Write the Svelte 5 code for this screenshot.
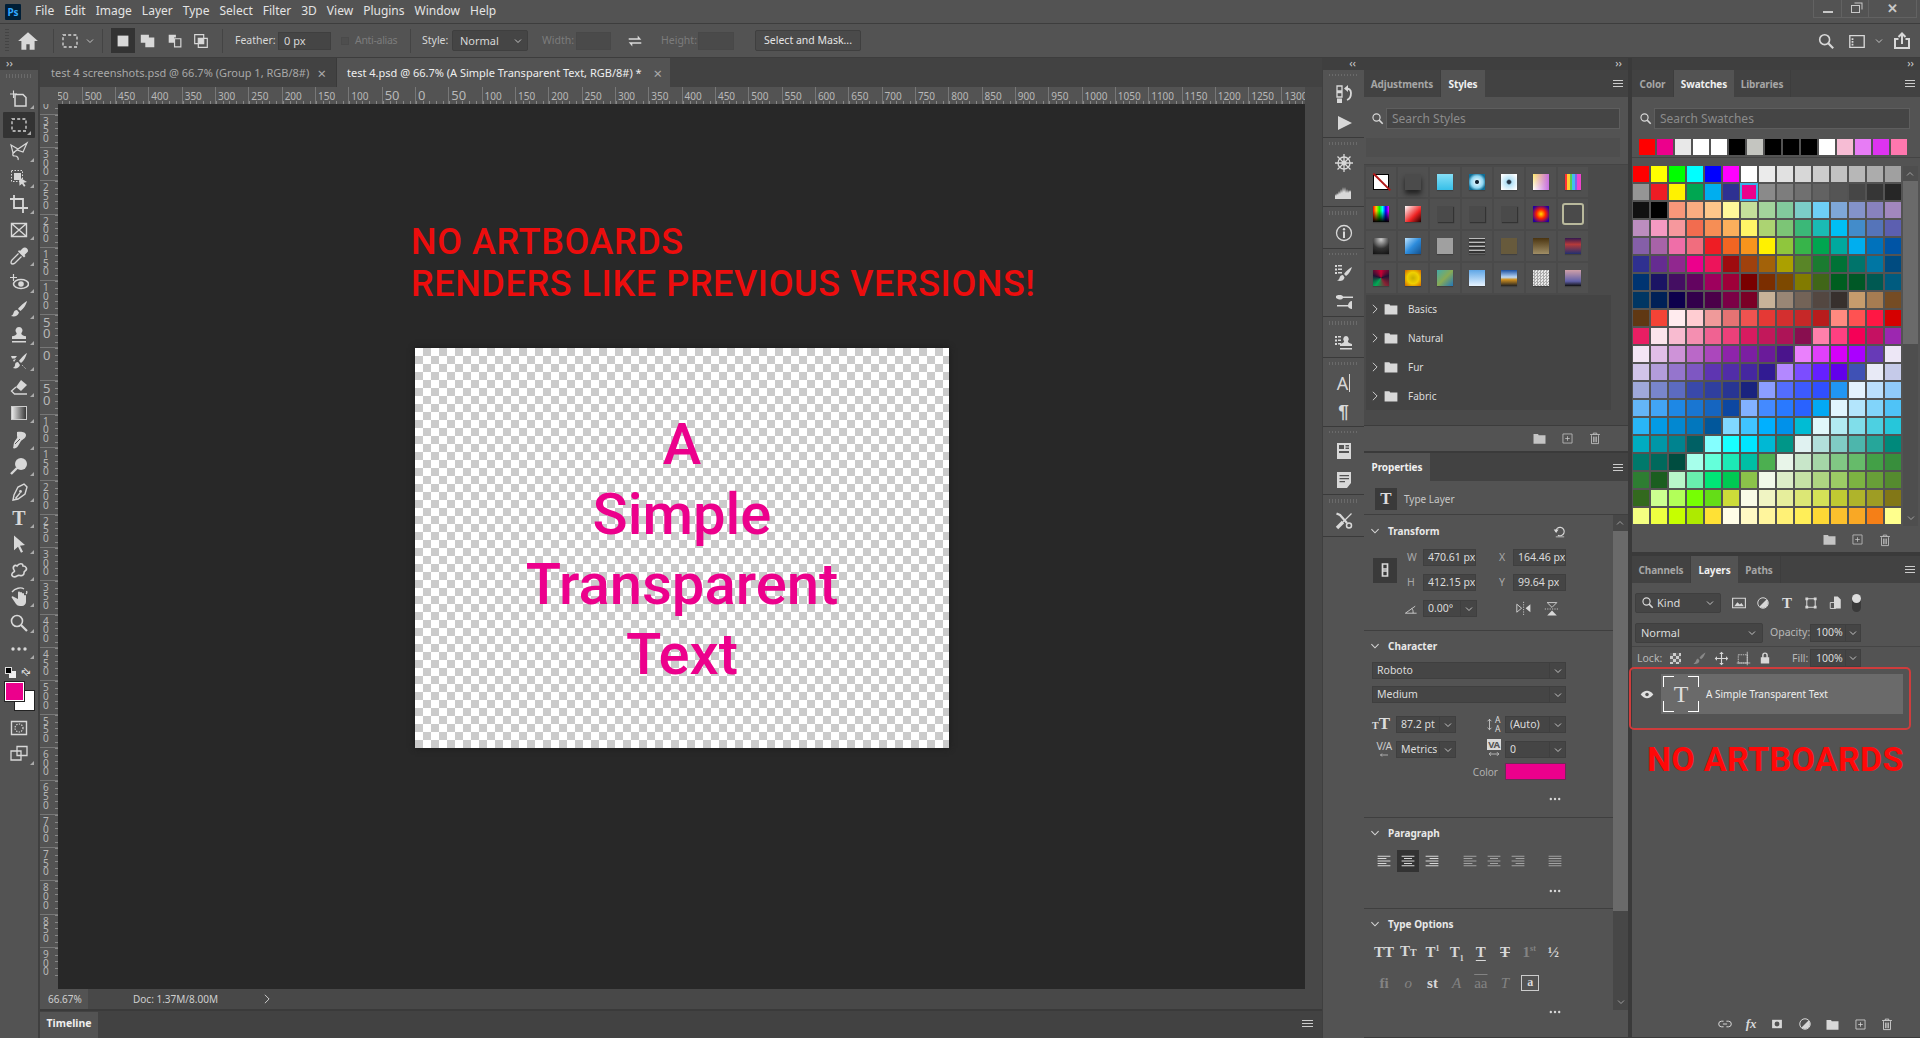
<script>
  const p = (d, w = 1.3) => `<path d="${d}" fill="none" stroke="currentColor" stroke-width="${w}"/>`;
  const f = (d) => `<path d="${d}" fill="currentColor"/>`;
  const icons = {
    home: f('M10 2 1 10h3v8h4.500v-5h3v5H16v-8h3z'),
    marquee: '<rect x="3" y="4" width="14" height="12" fill="none" stroke="currentColor" stroke-width="1.300" stroke-dasharray="3 2.200"/>',
    sel1: f('M4 4h12v12H4z'),
    sel2: f('M2 3h9v3h6v11H7v-5H2z'),
    sel3: f('M3 3h8v3H9v6H3z') + p('M9.500 7.500h7v9h-7z'),
    sel4: p('M3 3h10v10H3z') + p('M7 7h10v10H7z') + f('M7 7h6v6H7z'),
    swap: f('M3 7h10V4l4 4.500H3zM17 13H7v3l-4-4.500h14z'),
    search: '<circle cx="8.500" cy="8.500" r="5.500" fill="none" stroke="currentColor" stroke-width="1.800"/>' + p('M12.500 12.500 18 18', 2.4),
    screen: p('M2 4h16v13H2z', 1.500) + f('M4 7h2v2H4zM4 10h2v2H4zM4 13h2v2H4z'),
    share: p('M6.500 8H3v9h14V8h-3.500', 2) + p('M10 13V2.500M6.500 6 10 2.500 13.500 6', 2),
    artboard: p('M6 5.500h8l3 3V17H6z', 1.500) + p('M1 5h7M4.500 1.500V9', 1.100),
    lasso: p('M2 4 9 8 18 2 14 11 8 9 4 12z', 1.200) + p('M6 11c-3 1-3 4 0 4 2 0 4 2 3 4', 1.200),
    object: '<rect x="2.500" y="2.500" width="11" height="11" fill="none" stroke="currentColor" stroke-dasharray="1.500 1.500"/>' + f('M5 5h7v7H5z') + f('M10 9l8 5-3.500.800 2 3-1.500 1-2-3-2.500 2z'),
    crop: p('M5 1v13h14M1 5h13v14', 1.800),
    frame: p('M2.500 3.500h15v13h-15zM2.500 3.500l15 13M17.500 3.500l-15 13', 1.400),
    eyedrop: f('M14 2c1-1 3-.500 4 .500s1.500 2.500.500 3.500l-3 3 1 1-1.500 1.500-6-6L10 4l1 1z') + p('M9.500 7.500 3 14c-1 1-1 2-1 3l1 1c1 0 2 0 3-1l6.500-6.500'),
    heal: '<ellipse cx="12" cy="12" rx="7.500" ry="4.500" fill="none" stroke="currentColor" stroke-width="1.600"/><circle cx="12" cy="12" r="2.800" fill="currentColor"/>' + p('M1 5.500h7M4.500 2v7', 1.200),
    brush: f('M18 2c-2 1-7 5-9 8l2.500 2c3-2 6-7 6.500-10zM8 11c-2 0-3 1-3.500 3-.300 1.500-1.500 2.500-2.500 3 3 1 7 .500 8-3.500z'),
    stamp: f('M10 2a3.500 3.500 0 0 1 2.500 6c-.500.800 0 1.500 1.500 2.500 1 .500 2 .500 3 .800V14H3v-2.700c1-.300 2-.300 3-.800 1.500-1 2-1.700 1.500-2.500A3.500 3.500 0 0 1 10 2zM3 16h14v1.500H3z'),
    mixer: f('M18 2c-2 1-6 5-8 8l2 2c3-2 5-7 6-10zM9 11c-2 0-3 1-3 3 0 1.500-1 2-2 3 3 1 6 0 7-3zM2 5h6l-2 2.500H3zM4 9l3-1-2 3z') + '<path d="M13 14l4 4" stroke="currentColor" stroke-dasharray="1 1.500" fill="none"/>',
    eraser: f('M12 3 18 8 12 14 7 10z') + p('M7 10 2.500 14l3 3H18', 1.300),
    gradient: '<defs><linearGradient id="gr"><stop stop-color="#eee"/><stop offset="1" stop-color="#333"/></linearGradient></defs><rect x="2.500" y="3.500" width="15" height="13" fill="url(#gr)" stroke="#ccc"/>',
    smudge: f('M8 2c4-1 9 0 9 3 0 3-3 4-5 6l-3 5c-1 2-4 3-5 2 1-2 0-4 2-7 1-2 3-3 2-5z') + '<path d="M11 9 6 14" stroke="#535353" stroke-width="1" fill="none"/>',
    dodge: '<circle cx="12" cy="8" r="6" fill="currentColor"/>' + p('M8 12 2 18', 2.400),
    pen: p('M15 2l3 3-2 7-7 5-5 1 1-5 4-8zM6.500 16.500 11 11', 1.400) + '<circle cx="11.500" cy="9.500" r="1.400" fill="currentColor"/>',
    pointer: f('M5 1.500 16 11l-5 .800 3 6-2 1-3-6-4 3.500z'),
    shape: p('M5 10C3 7 6 4 8 6c2-3 6-3 6 0 3 0 5 3 2 5-2 1 0 3-2 4-2 2-4-1-6 1-3 2-6 0-5-2 0-2 4-2 2-4z', 1.600),
    hand: f('M5 10c-2-2-3 0-2 1l4 6c1 1 2 2 4 2h2c2 0 4-2 4-4V9c0-1.500-2-1.500-2 0V7c0-1.500-2-1.500-2 0V6c0-1.500-2-1.500-2 0v-.500c0-1.500-2-1.500-2 0V12z') + p('M3 5C6 1 12 0 15 2M17 7c1-1 1-2 .500-3', 1.300),
    zoom: '<circle cx="8" cy="8" r="5.500" fill="none" stroke="currentColor" stroke-width="1.600"/>' + p('M12 12l6 6', 2.200),
    dots: '<circle cx="4" cy="10" r="1.700" fill="currentColor"/><circle cx="10" cy="10" r="1.700" fill="currentColor"/><circle cx="16" cy="10" r="1.700" fill="currentColor"/>',
    quick: p('M2.500 3.500h15v13h-15z', 1.400) + '<circle cx="10" cy="10" r="4" fill="none" stroke="currentColor" stroke-width="1.200" stroke-dasharray="1.300 1.300"/>',
    scrmode: p('M8 2.500h10v9H8z', 1.300) + p('M2 7h10v9H2z', 1.300),
    history: p('M3 2h5v5H3zM3 8.500h5v4.500H3z', 1.300) + f('M3 14.500h5V19H3z') + p('M12 5c3-1 5 1 5 4 0 3-1 6-4 7', 1.800) + f('M10 4.500 14 1v7z'),
    play: f('M4 3 18 10 4 17z'),
    wheel: '<circle cx="10" cy="10" r="6" fill="none" stroke="currentColor" stroke-width="1.300"/>' + p('M1 10h18M10 1v18M3.500 3.500l13 13M16.500 3.500l-13 13', 1.300) + '<circle cx="10" cy="10" r="2.500" fill="currentColor"/>',
    histo: f('M1 17v-5l1 2 1-3 1 2 1-4 1 3 1-5 1 4 1-6 1 5 1-5 1 6 1-4 1 4 1-3 1 2 1-2v9z'),
    info: '<circle cx="10" cy="10" r="7.500" fill="none" stroke="currentColor" stroke-width="1.300"/><circle cx="10" cy="6.300" r="1.200" fill="currentColor"/><path d="M9 8.500h2V15H9z" fill="currentColor"/>',
    brushset: f('M1 2h2v2H1zM1 5.500h2v2H1zM1 9h2v2H1zM4 2h4v1.500H4zM4 5.500h4V7H4zM4 9h4v1.500H4z') + f('M18 4c-2 1-6 4-8 7l2 2c3-2 5-6 6-9zM9 12c-2 0-3 1-3.500 3-.300 1-1 2-2.500 2.500 3 1 7 .500 7.500-3z'),
    mixers: f('M2 4c2-1.500 3-1 4-1 1.500 0 2.500 .500 3 1.500h10v1.400H9C8.500 7 7 7.500 6 7.500 5 7.500 4 7 2 6zM18 9v8c-2 0-3.500-1-4-2.500H3V13h11c.500-2 2-4 4-4z'),
    stampset: f('M1 3h2v2H1zM1 6.500h2v2H1zM1 10h2v2H1zM4 3h3v1.500H4zM4 6.500h3V8H4zM4 10h3v1.500H4z') + f('M12 3a3 3 0 0 1 2 5c-.500 1 .500 2 4 3v2H6v-2c3.500-1 4.500-2 4-3a3 3 0 0 1 2-5zM6 15h12v1.500H6z'),
    glyphs: f('M3 2h14v16H3zM5 4v4h5V4zM11.500 4v1.500H15V4zM11.500 6.500V8H15V6.500zM5 10v2h10v-2z'),
    notes: f('M3 2h14v11l-4 5H3zM5.500 5v1.300H15V5zM5.500 8v1.300H15V8zM5.500 11v1.300H11V11z'),
    tools: p('M17.500 2.500 9 11', 1.300) + p('M9 11 3 17', 3.400) + p('M2.500 2.500 6 4 13 12', 2.200) + '<circle cx="15" cy="14.500" r="2.500" fill="none" stroke="currentColor" stroke-width="1.500"/>',
    chev: p('M4 7l6 6 6-6', 1.700),
    chevr: p('M7 4l6 6-6 6', 1.300),
    folder: f('M2 4h6l1 1.500h9V17H2z'),
    newp: p('M3 3h14v14H3z', 1.200) + p('M10 6.500v7M6.500 10h7', 1.200),
    trash: p('M5 6v12h10V6M3 5h14M7.500 5V3h5v2M8 8v8M10 8v8M12 8v8', 1.200),
    link: p('M7.500 4h5v7h-5zM7.500 9h5v7h-5z', 1.700),
    undo: p('M4 11a6 6 0 1 1 3 5', 1.600) + f('M1 8h7l-3.500 5zM4 18h12v1H4z'),
    angle: p('M2 16 16 6M2 16h16M11 9c2 2 2 4 2 7', 1.200),
    flipv: p('M1 4l6 5-6 5z', 1.100) + f('M18 4v10l-6-5z') + '<path d="M9.500 1v17" stroke="currentColor" stroke-dasharray="1.500 1.500"/>',
    fliph: p('M4 2l6 6 6-6z', 1.100) + f('M4 18l6-6 6 6z') + '<path d="M1 10h18" stroke="currentColor" stroke-dasharray="1.500 1.500"/>',
    image: p('M2 4h16v12H2z', 1.400) + f('M4 14l4-5 3 3 2-2 3 4z'),
    adjust: '<circle cx="10" cy="10" r="7.500" fill="none" stroke="currentColor" stroke-width="1.400"/><path d="M15 5 5 15a7 7 0 0 0 10-10z" fill="currentColor"/>',
    bbox: p('M4 4h12v12H4z', 1.500) + f('M2 2h4v4H2zM14 2h4v4h-4zM2 14h4v4H2zM14 14h4v4h-4z'),
    smart: f('M8 2h5l4 4v12H8z') + p('M3 10h7v8H3z', 1.200),
    lockp: f('M18 2c-2 1-6 4-8 7l2 2c3-2 5-6 6-9zM8 10c-2 .500-2 2-3 4-.400 1-2 2-3 3 3 1 7 0 8-4z'),
    move: p('M10 2v16M2 10h16', 1.500) + f('M10 1l3 3H7zM10 19l-3-3h6zM1 10l3-3v6zM19 10l-3 3V7z'),
    lockart: '<rect x="3" y="5" width="12" height="11" fill="none" stroke="currentColor" stroke-dasharray="2 1"/>' + p('M1 16h18M15 1v18', 1),
    lock: f('M4 9h12v9H4zM6 9V6a4 4 0 0 1 8 0v3h-2V6a2 2 0 0 0-4 0v3z'),
    chain: p('M7 10h6M8 6H5a4 4 0 0 0 0 8h3M12 6h3a4 4 0 0 1 0 8h-3', 1.400),
    mask: f('M3 4h14v12H3z') + '<circle cx="10" cy="10" r="3.500" fill="#535353"/>',
    alignl: p('M2 4h16M2 7h11M2 10h16M2 13h11M2 16h16', 1.300),
    alignc: p('M2 4h16M5 7h10M2 10h16M5 13h10M2 16h16', 1.300),
    alignr: p('M2 4h16M7 7h11M2 10h16M7 13h11M2 16h16', 1.300),
    justify: p('M2 4h16M2 7h16M2 10h16M2 13h16M2 16h16', 1.300),
    vert: p('M10 2v16M7 5l3-3 3 3M7 15l3 3 3-3', 1.200),
    horiz: p('M2 10h16M5 7l-3 3 3 3M15 7l3 3-3 3', 1.200),
    left: p('M18 10H3M6 7l-3 3 3 3', 1.300)
  };

  const menu = ['File', 'Edit', 'Image', 'Layer', 'Type', 'Select', 'Filter', '3D', 'View', 'Plugins', 'Window', 'Help'];

  const hticks = Array.from({ length: 38 }, (_, i) => Math.abs((i - 11) * 50));
  const vticks = Array.from({ length: 27 }, (_, i) => Math.abs((i - 8) * 50));

  const tools = ['artboard', 'marquee', 'lasso', 'object', 'crop', 'frame', 'eyedrop', 'heal', 'brush', 'stamp', 'mixer', 'eraser', 'gradient', 'smudge', 'dodge', 'pen', 'T', 'pointer', 'shape', 'hand', 'zoom', 'dots'];

  const dock = [
    { h: 68, items: ['history', 'play'] },
    { h: 69, items: ['wheel', 'histo'] },
    { h: 42, items: ['info'] },
    { h: 68, items: ['brushset', 'mixers'] },
    { h: 41, items: ['stampset'] },
    { h: 69, items: ['A', 'P'] },
    { h: 68, items: ['glyphs', 'notes'] },
    { h: 42, items: ['tools'] }
  ];

  const styleCells = [
    'linear-gradient(45deg,#fff 0 100%)',
    '#4b4b4b',
    'linear-gradient(#86dff6,#36bfe8)',
    'radial-gradient(circle,#123 0 1.500px,#cfeefa 2.500px,#8ed6f2 6px,#0f6d95 9px)',
    'radial-gradient(circle,#234 0 1.500px,#b5e3f8 3px,#fff 10px)',
    'linear-gradient(90deg,#ffffff00,#c86ee0),linear-gradient(#ffe96a,#fff)',
    'linear-gradient(90deg,#f33 0 15%,#fc3 15% 30%,#5c5 30% 45%,#4be 45% 60%,#76e 60% 75%,#e4c 75%)',
    'linear-gradient(#fff0 30%,#000),linear-gradient(90deg,#f00,#fc0,#0f0,#0ff,#00f,#f0f)',
    'linear-gradient(135deg,#fff,#e22 60%,#200)',
    '#4a4a4a', '#4a4a4a', '#4a4a4a',
    'radial-gradient(circle,#fd0 0,#f20 40%,#2200a0 85%)',
    'transparent',
    'radial-gradient(circle at 50% 10%,#ccc,#333 55%,#111)',
    'linear-gradient(135deg,#bfe4ff,#2d8cdc 50%,#14508c)',
    '#a0a0a0',
    'repeating-linear-gradient(#bbb 0 1px,#333 1px 3px,#666 3px 4px)',
    '#675a3c',
    'linear-gradient(#4a3410,#a08e66)',
    'linear-gradient(#33184f,#b53a3a 40%,#203070)',
    'conic-gradient(#c03,#213,#823,#0a5,#213,#c03)',
    'radial-gradient(circle,#c8b000,#f0d000 50%,#d06000)',
    'linear-gradient(135deg,#4aa 0,#8a5 50%,#27b 100%)',
    'linear-gradient(#5fa6e6,#e8f4ff)',
    'linear-gradient(#1b4fa0,#bcd8f6 45%,#d09020 60%,#222)',
    'repeating-conic-gradient(#aaa 0 25%,#e8e8e8 0 50%) 0 0/3px 3px',
    'linear-gradient(#d0a0a8,#6060a8 70%,#111)'
  ];

  const recent = ['#ff0000', '#ec008c', '#e8e8e8', '#ffffff', '#ffffff', '#000000', '#c4c5c0', '#000000', '#000000', '#000000', '#ffffff', '#f6bcd4', '#e77cf5', '#dd33f0', '#ff77ae'];

  const swatches = `#ff0000 #ffff00 #00ff00 #00ffff #0000ff #ff00ff #ffffff #ebebeb #e1e1e1 #d7d7d7 #cccccc #c2c2c2 #b7b7b7 #acacac #a0a0a0
#959595 #ed1c24 #fff200 #00a651 #00aeef #2e3192 #ec008c #8a8a8a #7d7d7d #707070 #626262 #555555 #464646 #363636 #262626
#111111 #000000 #f7977a #f9ad81 #fdc68a #fff79a #c4df9b #a2d39c #82ca9d #7bcdc8 #6ecff6 #7ea7d8 #8493ca #8882be #a187be
#bc8dbf #f49ac2 #f6989d #f26c4f #f68e55 #fbaf5c #fff467 #acd372 #7cc576 #3bb878 #1abbb4 #00bff3 #438cca #5574b9 #5c5fb0
#855fa8 #a763a8 #ef6ea8 #f16d7e #ee1d24 #f16522 #f7941d #fff100 #8fc63d #37b44a #00a650 #00a99e #00aeef #0072bc #0054a5
#2f3090 #652c91 #91278f #ec008c #ed145b #9e0b0f #a0410d #a36209 #aba000 #598527 #1a7b30 #007236 #00746b #0076a3 #004b80
#003471 #1b1464 #440e62 #630460 #9e005d #9e0039 #790000 #7b2e00 #7d4900 #827b00 #406618 #005e20 #005826 #005952 #005b7f
#003663 #002157 #0d004c #32004b #4b0049 #7b0046 #7a0026 #c7b299 #998675 #736357 #534741 #37302d #c69c6d #a67c52 #754c24
#603813 #f44336 #ffebee #ffcdd2 #ef9a9a #e57373 #ef5350 #e53935 #d32f2f #c62828 #b71c1c #ff8a80 #ff5252 #ff1744 #d50000
#e91e63 #fce4ec #f8bbd0 #f48fb1 #f06292 #ec407a #d81b60 #c2185b #ad1457 #880e4f #ff80ab #ff4081 #f50057 #c51162 #9c27b0
#f3e5f5 #e1bee7 #ce93d8 #ba68c8 #ab47bc #8e24aa #7b1fa2 #6a1b9a #4a148c #ea80fc #e040fb #d500f9 #aa00ff #673ab7 #ede7f6
#d1c4e9 #b39ddb #9575cd #7e57c2 #5e35b1 #512da8 #4527a0 #311b92 #b388ff #7c4dff #651fff #6200ea #3f51b5 #e8eaf6 #c5cae9
#9fa8da #7986cb #5c6bc0 #3949ab #303f9f #283593 #1a237e #8c9eff #536dfe #3d5afe #304ffe #2196f3 #e3f2fd #bbdefb #90caf9
#64b5f6 #42a5f5 #1e88e5 #1976d2 #1565c0 #0d47a1 #82b1ff #448aff #2979ff #2962ff #03a9f4 #e1f5fe #b3e5fc #81d4fa #4fc3f7
#29b6f6 #039be5 #0288d1 #0277bd #01579b #80d8ff #40c4ff #00b0ff #0091ea #00bcd4 #e0f7fa #b2ebf2 #80deea #4dd0e1 #26c6da
#00acc1 #0097a7 #00838f #006064 #84ffff #18ffff #00e5ff #00b8d4 #009688 #e0f2f1 #b2dfdb #80cbc4 #4db6ac #26a69a #00897b
#00796b #00695c #004d40 #a7ffeb #64ffda #1de9b6 #00bfa5 #4caf50 #e8f5e9 #c8e6c9 #a5d6a7 #81c784 #66bb6a #43a047 #388e3c
#2e7d32 #1b5e20 #b9f6ca #69f0ae #00e676 #00c853 #8bc34a #f1f8e9 #dcedc8 #c5e1a5 #aed581 #9ccc65 #7cb342 #689f38 #558b2f
#33691e #ccff90 #b2ff59 #76ff03 #64dd17 #cddc39 #f9fbe7 #f0f4c3 #e6ee9c #dce775 #d4e157 #c0ca33 #afb42b #9e9d24 #827717
#f4ff81 #eeff41 #c6ff00 #aeea00 #ffe135 #fffde7 #fff9c4 #fff59d #fff176 #ffee58 #fdd835 #fbc02d #f9a825 #f57f17 #ffff8d
#ffff00 #ffea00 #ffd600 #ffc400 #ffab00 #ffffff #ffecb3 #ffe082 #ffd54f #ffca28 #ffc107 #ffb300 #ffa000 #ff8f00 #ff6f00`.split(/\s+/);

  const folders = ['Basics', 'Natural', 'Fur', 'Fabric'];
</script>

{#snippet ic(name, size = 20)}
  <svg class="ic" viewBox="0 0 20 20" width={size} height={size}>{@html icons[name]}</svg>
{/snippet}

{#snippet grip()}<div class="grip"></div>{/snippet}

{#snippet field(text, w, dd = false)}
  <div class="field" class:hasdd={dd} style="width:{w}px"><span class="ftext">{text}</span>{#if dd}<span class="dd">{@render ic('chev', 10)}</span>{/if}</div>
{/snippet}

{#snippet section(title)}
  <div class="sechead"><span class="secchev">{@render ic('chev', 12)}</span><span>{title}</span></div>
{/snippet}

{#snippet more()}<div class="more">{@render ic('dots', 14)}</div>{/snippet}

<div class="app">
  <header class="menu">
    <div class="ps">Ps</div>
    <nav class="menuitems">{#each menu as m}<span>{m}</span>{/each}</nav>
    <div class="winbtns">
      <span class="w1"><i class="min"></i></span>
      <span class="w2"><i class="rest"></i></span>
      <span class="w3">✕</span>
    </div>
  </header>

  <div class="options">
    <div class="ogrip"></div>
    <span class="o-home">{@render ic('home', 22)}</span>
    <i class="osep s1"></i>
    <span class="o-marq">{@render ic('marquee', 20)}</span>
    <span class="o-chev">{@render ic('chev', 10)}</span>
    <i class="osep s2"></i>
    <span class="o-active">{@render ic('sel1', 18)}</span>
    <span class="o-sel a">{@render ic('sel2', 18)}</span>
    <span class="o-sel">{@render ic('sel3', 18)}</span>
    <span class="o-sel">{@render ic('sel4', 18)}</span>
    <i class="osep s3"></i>
    <span class="o-label feather">Feather:</span>
    <div class="o-input fe">0 px</div>
    <i class="o-check"></i>
    <span class="o-label dim anti">Anti-alias</span>
    <i class="osep s4"></i>
    <span class="o-label stylel">Style:</span>
    <div class="o-select"><span>Normal</span>{@render ic('chev', 10)}</div>
    <span class="o-label dim widthl">Width:</span>
    <div class="o-empty w"></div>
    <span class="o-swap">{@render ic('swap', 18)}</span>
    <span class="o-label dim heightl">Height:</span>
    <div class="o-empty"></div>
    <div class="o-button">Select and Mask...</div>
    <div class="o-right">
      {@render ic('search', 18)}
      <span class="o-scr">{@render ic('screen', 18)}</span>
      <span class="o-c2">{@render ic('chev', 10)}</span>
      <span class="o-share">{@render ic('share', 20)}</span>
    </div>
  </div>

  <div class="work">
    <aside class="toolbar">
      <div class="strip left">››</div>
      {@render grip()}
      <div class="toolist">
        {#each tools as t}
          <div class="tool" class:sel={t === 'marquee'}>
            {#if t === 'T'}<span class="t-glyph">T</span>{:else}{@render ic(t, 20)}{/if}
          </div>
        {/each}
      </div>
      <div class="colors">
        <div class="mini">
          <span class="defcol"><i></i><i></i></span>
          <span class="swapcol">⇄</span>
        </div>
        <div class="fgbg"><i class="bg"></i><i class="fg"></i></div>
      </div>
      <div class="tool nocorner">{@render ic('quick', 20)}</div>
      <div class="tool">{@render ic('scrmode', 20)}</div>
    </aside>

    <section class="center">
      <div class="tabs">
        <div class="tab one"><span>test 4 screenshots.psd @ 66.7% (Group 1, RGB/8#)</span><b>×</b></div>
        <div class="tab two"><span>test 4.psd @ 66.7% (A Simple Transparent Text, RGB/8#) *</span><b>×</b></div>
      </div>
      <div class="hrow">
        <div class="corner"></div>
        <div class="hruler"><div class="hin">{#each hticks as n}<span class:big={n <= 50}>{n}</span>{/each}</div></div>
        <div class="hgap"></div>
      </div>
      <div class="docrow">
        <div class="vruler"><div class="vin">{#each vticks as n}<div class="vt"><span class:big={n <= 50}>{n}</span></div>{/each}</div></div>
        <main class="canvas">
          <h1 class="note">NO ARTBOARDS<br />RENDERS LIKE PREVIOUS VERSIONS!</h1>
          <div class="doc">
            <div class="doctext">A<br />Simple<br />Transparent<br />Text</div>
          </div>
        </main>
        <div class="vscroll"></div>
      </div>
      <div class="status">
        <span class="zoomv">66.67%</span>
        <span class="docsize">Doc: 1.37M/8.00M</span>
        <span class="statarrow">{@render ic('chevr', 14)}</span>
      </div>
      <div class="timeline">
        <div class="tltab">Timeline</div>
        <div class="tlmenu"><i></i><i></i><i></i></div>
      </div>
    </section>

    <aside class="dock">
      <div class="strip dockstrip">‹‹</div>
      {#each dock as g}
        <div class="dgroup" style="height:{g.h}px">
          {@render grip()}
          {#each g.items as it}
            <div class="ditem">
              {#if it === 'A'}<span class="a-glyph">A<em></em></span>
              {:else if it === 'P'}<span class="p-glyph">¶</span>
              {:else}{@render ic(it, 20)}{/if}
            </div>
          {/each}
        </div>
      {/each}
    </aside>

    <div class="col1">
      <div class="strip colstrip">››</div>
      <section class="panel styles">
        <div class="ptabs">
          <span class="ptab" style="width:77px">Adjustments</span>
          <span class="ptab on" style="width:44px">Styles</span>
          <span class="pmenu"><i></i><i></i><i></i></span>
        </div>
        <div class="searchrow">
          <span class="sic">{@render ic('search', 13)}</span>
          <div class="searchbox">Search Styles</div>
        </div>
        <div class="recentbar"></div>
        <div class="stylearea">
          <div class="stylegrid">
            {#each styleCells as c, i}
              <div class="scell" class:drop={i === 1} class:flat={i >= 9 && i <= 11}>
                {#if i === 0}
                  <div class="none"></div>
                {:else if i === 13}
                  <div class="ring"></div>
                {:else}
                  <div class="sinner" style="background:{c}"></div>
                {/if}
              </div>
            {/each}
          </div>
          <div class="folders">
            {#each folders as fo}
              <div class="frow">
                <span class="fchev">{@render ic('chevr', 14)}</span>
                {@render ic('folder', 16)}
                <span class="fname">{fo}</span>
              </div>
            {/each}
          </div>
        </div>
        <div class="pfoot stylefoot">
          {@render ic('folder', 15)}{@render ic('newp', 13)}{@render ic('trash', 14)}
        </div>
      </section>

      <section class="panel props">
        <div class="ptabs prtabs">
          <span class="ptab on first" style="width:66px">Properties</span>
          <span class="pmenu"><i></i><i></i><i></i></span>
        </div>
        <div class="typelayer">
          <span class="tbox">T</span>
          <span>Type Layer</span>
        </div>
        <div class="propbody">
          <div class="propmain">
            <div class="sec transform">
              <div class="sechead"><span class="secchev">{@render ic('chev', 12)}</span><span>Transform</span><span class="undo">{@render ic('undo', 14)}</span></div>
              <div class="tfgrid">
                <span class="linkbtn">{@render ic('link', 20)}</span>
                <div class="tfcols">
                  <div class="tfrow"><label>W</label>{@render field('470.61 px', 53)}<label class="lx">X</label>{@render field('164.46 px', 53)}</div>
                  <div class="tfrow"><label>H</label>{@render field('412.15 px', 53)}<label class="lx">Y</label>{@render field('99.64 px', 53)}</div>
                </div>
              </div>
              <div class="anglerow">
                <span class="aic">{@render ic('angle', 14)}</span>
                {@render field('0.00°', 54, true)}
                <span class="flip1">{@render ic('flipv', 16)}</span>
                <span class="flip2">{@render ic('fliph', 16)}</span>
              </div>
            </div>

            <div class="sec character">
              {@render section('Character')}
              <div class="selrow first">{@render field('Roboto', 194, true)}</div>
              <div class="selrow">{@render field('Medium', 194, true)}</div>
              <div class="charrow one">
                <span class="serifT"><small>T</small>T</span>
                {@render field('87.2 pt', 60, true)}
                <span class="lead stack"><span class="arrowcol">{@render ic('vert', 13)}</span><span class="aa">A<br />A</span></span>
                {@render field('(Auto)', 61, true)}
              </div>
              <div class="charrow two">
                <span class="va"><span>V/A</span><span class="vaarrow">{@render ic('left', 10)}</span></span>
                {@render field('Metrics', 60, true)}
                <span class="lead vabox"><b>VA</b>{@render ic('horiz', 12)}</span>
                {@render field('0', 61, true)}
              </div>
              <div class="colorrow"><span>Color</span><i></i></div>
              {@render more()}
            </div>

            <div class="sec paragraph">
              {@render section('Paragraph')}
              <div class="aligns">
                <span class="al">{@render ic('alignl', 16)}</span>
                <span class="al active">{@render ic('alignc', 16)}</span>
                <span class="al">{@render ic('alignr', 16)}</span>
                <span class="al dimic g1">{@render ic('alignl', 16)}</span>
                <span class="al dimic">{@render ic('alignc', 16)}</span>
                <span class="al dimic">{@render ic('alignr', 16)}</span>
                <span class="al dimic g2">{@render ic('justify', 16)}</span>
              </div>
              {@render more()}
            </div>

            <div class="sec typeopts">
              {@render section('Type Options')}
              <div class="tyrow">
                <span>TT</span><span>T<small>T</small></span><span>T<sup>1</sup></span><span>T<sub>1</sub></span><span class="ul">T</span><span class="st">T</span><span class="dimt">1<sup>st</sup></span><span>½</span>
              </div>
              <div class="tyrow second">
                <span class="dimt">fi</span><span class="dimt it">o</span><span>st</span><span class="dimt it">A</span><span class="dimt oa">aa</span><span class="dimt it">T</span><span class="boxa">a</span>
              </div>
              {@render more()}
            </div>
          </div>
          <div class="pscroll"><span class="arr up">{@render ic('chev', 10)}</span><i class="thumb"></i><span class="arr">{@render ic('chev', 10)}</span></div>
        </div>
      </section>
    </div>

    <div class="col2">
      <div class="strip colstrip r">››</div>
      <section class="panel swatchpanel">
        <div class="ptabs">
          <span class="ptab" style="width:42px">Color</span>
          <span class="ptab on" style="width:60px">Swatches</span>
          <span class="ptab" style="width:57px">Libraries</span>
          <span class="pmenu"><i></i><i></i><i></i></span>
        </div>
        <div class="searchrow sw">
          <span class="sic">{@render ic('search', 13)}</span>
          <div class="searchbox">Search Swatches</div>
        </div>
        <div class="recentsw">{#each recent as c}<i style="background:{c}"></i>{/each}</div>
        <div class="swarea">
          <div class="swgrid">
            {#each swatches as c, i}<i style="background:{c}" class:picked={i === 21}></i>{/each}
          </div>
          <div class="swscroll"><span class="arr up">{@render ic('chev', 10)}</span><i class="thumb"></i><span class="arr">{@render ic('chev', 10)}</span></div>
        </div>
        <div class="pfoot swfoot">
          {@render ic('folder', 15)}{@render ic('newp', 13)}{@render ic('trash', 14)}
        </div>
      </section>

      <section class="panel layers">
        <div class="ptabs">
          <span class="ptab" style="width:59px">Channels</span>
          <span class="ptab on" style="width:47px">Layers</span>
          <span class="ptab" style="width:43px">Paths</span>
          <span class="pmenu"><i></i><i></i><i></i></span>
        </div>
        <div class="lfilter">
          <div class="lselect kind">{@render ic('search', 13)}<span>Kind</span><em>{@render ic('chev', 10)}</em></div>
          <span class="lf">{@render ic('image', 16)}</span>
          <span class="lf">{@render ic('adjust', 14)}</span>
          <span class="lf tt">T</span>
          <span class="lf">{@render ic('bbox', 14)}</span>
          <span class="lf">{@render ic('smart', 15)}</span>
          <span class="toggle"><i></i></span>
        </div>
        <div class="lblend">
          <div class="lselect blend"><span>Normal</span><em>{@render ic('chev', 10)}</em></div>
          <span class="lbl">Opacity:</span>
          <div class="pct"><span>100%</span><em>{@render ic('chev', 10)}</em></div>
        </div>
        <div class="llock">
          <span class="lbl">Lock:</span>
          <span class="lk check"></span>
          <span class="lk dimk">{@render ic('lockp', 15)}</span>
          <span class="lk">{@render ic('move', 15)}</span>
          <span class="lk">{@render ic('lockart', 15)}</span>
          <span class="lk">{@render ic('lock', 14)}</span>
          <span class="lbl fill">Fill:</span>
          <div class="pct"><span>100%</span><em>{@render ic('chev', 10)}</em></div>
        </div>
        <div class="llist">
          <div class="lrow">
            <span class="eye"><svg viewBox="0 0 20 12" width="14" height="9"><path d="M1 6c5-7 13-7 18 0-5 7-13 7-18 0z" fill="#e0e0e0"/><circle cx="10" cy="6" r="2.500" fill="#535353"/></svg></span>
            <div class="lsel">
              <div class="lthumb"><span>T</span></div>
              <span class="lname">A Simple Transparent Text</span>
            </div>
          </div>
          <div class="redtext">NO ARTBOARDS</div>
          <div class="redbox"></div>
        </div>
        <div class="pfoot layerfoot">
          {@render ic('chain', 14)}
          <span class="fx">fx</span>
          {@render ic('mask', 14)}
          {@render ic('adjust', 14)}
          {@render ic('folder', 15)}
          {@render ic('newp', 13)}
          {@render ic('trash', 14)}
        </div>
      </section>
    </div>
  </div>
</div>

<style>
  :global(body) { margin: 0; background: #535353; }
  .app { width: 1920px; height: 1038px; overflow: hidden; display: flex; flex-direction: column; background: #535353; color: #d8d8d8; font: 11px/1.2 "Noto Sans", "Open Sans", sans-serif; }
  .ic { display: block; flex: none; color: #d8d8d8; }
  i, em { font-style: normal; display: block; }

  .menu { height: 24px; flex: none; display: flex; align-items: center; border-bottom: 1px solid #3d3d3d; box-sizing: border-box; position: relative; }
  .ps { width: 16px; height: 16px; margin-left: 5px; background: #001e36; color: #31a8ff; font: 700 10px/16px "Noto Sans", sans-serif; text-align: center; border-radius: 1px; }
  .menuitems { display: flex; gap: 10px; margin-left: 14px; font-size: 12px; color: #e4e4e4; }
  .winbtns { margin-left: auto; display: flex; height: 18px; align-self: flex-start; border: 1px solid #626262; border-top: 0; margin-right: 3px; box-sizing: border-box; }
  .winbtns span { display: flex; align-items: center; justify-content: center; border-right: 1px solid #626262; color: #c8c8c8; position: relative; }
  .w1 { width: 27px; } .w2 { width: 26px; } .w3 { width: 47px; font-size: 13px; font-weight: 700; border-right: 0 !important; }
  .min { width: 10px; height: 2px; background: #c8c8c8; margin-top: 6px; }
  .rest { width: 7px; height: 6px; border: 1.500px solid #c8c8c8; box-shadow: 2px -2px 0 -.5px #535353, 3px -3px 0 -.5px #c8c8c8; }

  .options { height: 34px; flex: none; display: flex; align-items: center; border-bottom: 1px solid #3d3d3d; box-sizing: border-box; color: #d8d8d8; }
  .ogrip { width: 4px; height: 24px; margin-left: 5px; background: repeating-linear-gradient(#444 0 1px, transparent 1px 3px); flex: none; }
  .o-home { margin-left: 8px; }
  .osep { width: 1px; height: 24px; background: #444; flex: none; }
  .s1 { margin-left: 14px; } .s2 { margin-left: 7px; } .s3 { margin-left: 12px; } .s4 { margin-left: 15px; }
  .o-marq { margin-left: 6px; } .o-chev { margin-left: 5px; }
  .o-active { width: 24px; height: 25px; background: #333; display: flex; align-items: center; justify-content: center; margin-left: 8px; flex: none; }
  .o-sel { width: 18px; margin-left: 8.500px; flex: none; }
  .o-sel.a { margin-left: 4px; }
  .o-label { font-size: 10.500px; flex: none; white-space: nowrap; }
  .dim { color: #7c7c7c; }
  .feather { margin-left: 12px; width: 43px; }
  .o-input { width: 53px; height: 18px; background: #454545; border: 1px solid #3f3f3f; box-sizing: border-box; line-height: 16px; padding-left: 5px; flex: none; }
  .o-check { width: 8px; height: 8px; margin-left: 10px; background: #4e4e4e; border: 1px solid #4a4a4a; box-sizing: border-box; flex: none; }
  .anti { margin-left: 6px; width: 40px; letter-spacing: -.3px; }
  .stylel { margin-left: 11px; width: 30px; }
  .o-select { width: 76px; height: 21px; background: #454545; border: 1px solid #3f3f3f; border-radius: 2px; box-sizing: border-box; display: flex; align-items: center; justify-content: space-between; padding: 0 4px 0 7px; flex: none; }
  .widthl { margin-left: 14px; width: 34px; }
  .o-empty { width: 36px; height: 18px; background: #4a4a4a; border: 1px solid #484848; box-sizing: border-box; flex: none; }
  .o-empty.w { width: 35px; }
  .o-swap { margin-left: 15px; color: #999; flex: none; }
  .heightl { margin-left: 17px; width: 37px; }
  .o-button { margin-left: 21px; width: 106px; height: 21px; background: #4a4a4a; border: 1px solid #3f3f3f; border-radius: 2px; box-sizing: border-box; text-align: center; line-height: 18px; font-size: 10.500px; color: #e4e4e4; flex: none; }
  .o-right { margin-left: auto; margin-right: 8px; display: flex; align-items: center; }
  .o-scr { margin-left: 13px; } .o-c2 { margin-left: 8px; } .o-share { margin-left: 8px; }

  .work { flex: 1; min-height: 0; display: flex; }
  .strip { height: 12px; flex: none; background: #3f3f3f; color: #ccc; font-size: 11px; line-height: 10px; }
  .strip.left { padding-left: 6px; }
  .grip { height: 4px; margin: 4px 6px 0; background: repeating-linear-gradient(90deg, #6a6a6a 0 1px, transparent 1px 3px); }

  .toolbar { width: 40px; flex: none; box-sizing: border-box; border-right: 2px solid #3f3f3f; display: flex; flex-direction: column; background: #535353; }
  .toolist { margin-top: 8px; flex: none; }
  .tool { height: 26.200px; display: flex; align-items: center; justify-content: center; position: relative; box-sizing: border-box; }
  .tool::after { content: ""; position: absolute; right: 4px; bottom: 3px; border: 2px solid transparent; border-right-color: #aaa; border-bottom-color: #aaa; }
  .tool.nocorner::after { display: none; }
  .tool.sel { background: #333; margin: 0 3px; border-radius: 1px; }
  .t-glyph { font: 700 20px/20px "Liberation Serif", serif; color: #d8d8d8; }
  .colors { height: 53px; flex: none; }
  .mini { height: 20px; display: flex; align-items: center; padding-left: 5px; }
  .defcol { position: relative; width: 11px; height: 11px; display: block; }
  .defcol i { position: absolute; width: 7px; height: 7px; }
  .defcol i:first-child { background: #000; border: 1px solid #ddd; left: 0; top: 0; z-index: 1; box-sizing: border-box; }
  .defcol i:last-child { background: #eee; right: 0; bottom: 0; }
  .swapcol { margin-left: 5px; font-size: 12px; line-height: 12px; color: #ddd; font-family: "DejaVu Sans", sans-serif; transform: rotate(45deg) scale(.9); }
  .fgbg { display: grid; }
  .fgbg i { grid-area: 1 / 1; box-sizing: border-box; }
  .fg { width: 19px; height: 19px; margin-left: 5px; background: #ec008c; border: 1px solid #fff; outline: 1px solid #222; z-index: 1; }
  .bg { width: 19px; height: 19px; margin: 9px 0 0 15px; background: #fff; outline: 1px solid #222; }

  .center { width: 1283px; flex: none; display: flex; flex-direction: column; border-right: 1px solid #3f3f3f; box-sizing: border-box; }
  .tabs { height: 29px; flex: none; display: flex; background: #424242; }
  .tab { display: flex; align-items: center; justify-content: space-between; box-sizing: border-box; font-size: 11px; }
  .tab b { font-weight: 400; font-size: 15px; color: #aaa; }
  .tab.one { width: 297px; padding: 0 10px 0 11px; color: #a8a8a8; border-right: 1px solid #3a3a3a; }
  .tab.two { width: 333px; padding: 0 8px 0 10px; background: #535353; color: #eee; }
  .hrow { height: 17px; flex: none; display: flex; background: #535353; }
  .corner { width: 18px; flex: none; }
  .hruler { width: 1247px; overflow: hidden; flex: none; }
  .hin { display: flex; margin-left: -9.670px; height: 17px; }
  .hin span { width: 33.333px; flex: none; box-sizing: border-box; font-size: 10px; line-height: 18px; color: #b8b8b8; padding-left: 2px; border-left: 1px solid #777; background: repeating-linear-gradient(90deg, #888 0 1px, transparent 1px 6.667px) 0 100% / 100% 3px no-repeat; }
  .hin span.big { font-size: 13px; line-height: 17px; }
  .hgap { flex: 1; background: #484848; }
  .docrow { height: 885px; flex: none; display: flex; }
  .vruler { width: 18px; flex: none; overflow: hidden; }
  .vin { margin-top: -23.670px; }
  .vt { height: 33.333px; box-sizing: border-box; border-top: 1px solid #777; background: repeating-linear-gradient(#888 0 1px, transparent 1px 6.667px) 100% 0 / 3px 100% no-repeat; padding: 2px 0 0 3px; }
  .vt span { display: block; width: 6px; word-break: break-all; font-size: 10px; line-height: 8.700px; color: #b8b8b8; }
  .vt span.big { font-size: 13px; line-height: 11.500px; width: 8px; }
  .canvas { width: 1247px; flex: none; background: #282828; box-sizing: border-box; padding-top: 117px; overflow: hidden; }
  .note { margin: 0 0 0 353px; font: 500 36px/42px Roboto, sans-serif; letter-spacing: .6px; color: #ec0d0d; white-space: nowrap; }
  .doc { width: 534px; height: 400px; margin: 43px 0 0 357px; background: repeating-conic-gradient(#cbcbcb 0 25%, #fff 0 50%) 0 0 / 16px 16px; box-shadow: 0 0 6px #1a1a1a; padding-top: 61px; box-sizing: border-box; }
  .doctext { font: 500 58px/70px Roboto, sans-serif; color: #ec008c; text-align: center; }
  .vscroll { flex: 1; background: #484848; }
  .status { height: 20px; flex: none; display: flex; align-items: center; background: #484848; font-size: 10px; color: #cfcfcf; }
  .zoomv { width: 48px; padding-left: 8px; box-sizing: border-box; height: 100%; line-height: 20px; background: #535353; }
  .docsize { margin-left: 45px; width: 127px; }
  .timeline { flex: 1; display: flex; align-items: flex-end; justify-content: space-between; background: #424242; border-top: 2px solid #3a3a3a; }
  .tltab { width: 58px; height: 26px; background: #535353; font-weight: 700; font-size: 10.500px; line-height: 23px; text-align: center; color: #eee; }
  .tlmenu { display: flex; flex-direction: column; gap: 2px; width: 11px; margin: 0 9px 11px 0; }
  .tlmenu i, .pmenu i { height: 1px; background: #ccc; }

  .dock { width: 41px; flex: none; background: #535353; border-right: 0; display: flex; flex-direction: column; }
  .dockstrip { text-align: right; padding-right: 8px; }
  .dgroup { flex: none; box-sizing: border-box; border-bottom: 1px solid #3a3a3a; display: flex; flex-direction: column; }
  .dgroup .grip { margin-bottom: 4px; }
  .ditem { height: 28.500px; display: flex; align-items: center; justify-content: center; flex: none; }
  .a-glyph { font: 400 18px/20px "Noto Sans", sans-serif; color: #d8d8d8; display: flex; align-items: center; }
  .a-glyph em { width: 1px; height: 18px; background: #d8d8d8; margin-left: 1px; }
  .p-glyph { font: 700 19px/20px "Liberation Sans", sans-serif; color: #d8d8d8; }

  .col1 { width: 268px; flex: none; display: flex; flex-direction: column; background: #3a3a3a; box-sizing: border-box; padding: 0 4px 0 0; }
  .col2 { width: 288px; flex: none; display: flex; flex-direction: column; background: #3a3a3a; }
  .colstrip { text-align: right; padding-right: 6px; }
  .panel { background: #535353; flex: none; display: flex; flex-direction: column; }
  .ptabs { height: 27px; flex: none; display: flex; background: #424242; align-items: stretch; }
  .prtabs { height: 28px; }
  .ptab { display: flex; align-items: center; justify-content: center; font-weight: 700; font-size: 10px; letter-spacing: -.1px; color: #a6a6a6; box-sizing: border-box; border-right: 1px solid #3d3d3d; }
  .ptab.on { background: #535353; color: #f0f0f0; border-right: 0; }
  .pmenu { margin-left: auto; display: flex; flex-direction: column; gap: 2px; width: 10px; margin-right: 5px; align-self: center; }

  .styles { height: 381px; }
  .searchrow { height: 41px; flex: none; display: flex; align-items: center; box-sizing: border-box; padding-top: 1px; }
  .sic { margin-left: 7px; width: 15px; }
  .searchbox { flex: 1; margin-right: 8px; height: 21px; background: #454545; border: 1px solid #5e5e5e; box-sizing: border-box; font-size: 12px; line-height: 19px; padding-left: 5px; color: #8b8b8b; }
  .recentbar { height: 19px; background: #4e4e4e; margin: 0 8px 0 2px; flex: none; }
  .stylearea { height: 262px; flex: none; margin-top: 7px; border-top: 1px solid #444; background: #4a4a4a; box-sizing: border-box; padding: 2px 0 0 2px; border-bottom: 1px solid #3c3c3c; }
  .stylegrid { display: grid; grid-template-columns: repeat(7, 30px); grid-auto-rows: 30px; gap: 2px; }
  .scell { display: flex; align-items: center; justify-content: center; background: #505050; }
  .sinner { width: 16px; height: 16px; box-shadow: 0 1px 1px #0003; }
  .scell.drop .sinner { box-shadow: 0 4px 5px #222; }
  .scell.flat .sinner { box-shadow: 1px 1px 1px #333; }
  .none { width: 16px; height: 16px; box-sizing: border-box; background: #fff; border: 1px solid #000; position: relative; }
  .none::after { content: ""; position: absolute; left: -4px; top: 6px; width: 24px; height: 1.500px; background: #b01818; transform: rotate(45deg); }
  .ring { width: 18px; height: 18px; border: 2px solid #b9b99c; border-radius: 3px; background: #4a4a4a; }
  .folders { margin-top: 2px; width: 245px; background: #444; height: 115px; }
  .frow { height: 28.750px; display: flex; align-items: center; padding-left: 2px; }
  .frow .fchev { margin-right: 1px; }
  .fname { margin-left: 9px; font-size: 10px; color: #dcdcdc; }
  .pfoot { display: flex; align-items: center; justify-content: flex-end; }
  .stylefoot { height: 24px; gap: 14px; padding-right: 26px; color: #aaa; }
  .stylefoot :global(.ic), .swfoot :global(.ic) { color: #c4c4c4; }

  .props { height: 584px; margin-top: 2px; }
  .ptab.first { border-right: 0; }
  .typelayer { height: 34px; flex: none; display: flex; align-items: center; border-bottom: 1px solid #3f3f3f; font-size: 10px; color: #c8c8c8; box-sizing: border-box; padding-top: 2px; }
  .tbox { width: 22px; height: 22px; margin: 0 7px 0 11px; background: #3a3a3a; font: 700 17px/22px "Liberation Serif", serif; text-align: center; color: #ddd; }
  .propbody { flex: 1; display: flex; min-height: 0; }
  .propmain { width: 249px; flex: none; }
  .sec { border-bottom: 1px solid #3f3f3f; box-sizing: border-box; }
  .sechead { display: flex; align-items: center; height: 30px; font-weight: 700; font-size: 10px; color: #e8e8e8; }
  .secchev { margin: 0 7px 0 5px; }
  .undo { margin-left: auto; margin-right: 46px; }
  .transform { height: 116px; }
  .transform .sechead { height: 31px; }
  .tfgrid { display: flex; align-items: center; height: 48px; }
  .linkbtn { width: 24px; height: 25px; background: #3a3a3a; margin-left: 9px; display: flex; align-items: center; justify-content: center; }
  .tfcols { display: flex; flex-direction: column; gap: 8px; margin-left: 10px; }
  .tfrow { display: flex; align-items: center; height: 17px; }
  .tfrow label { width: 16px; color: #a8a8a8; font-size: 10.500px; }
  .tfrow .lx { width: 14px; margin-left: 23px; }
  .field { height: 17px; background: #454545; border: 1px solid #3f3f3f; box-sizing: border-box; line-height: 15px; padding-left: 4px; font-size: 10.500px; color: #dcdcdc; display: flex; flex: none; justify-content: space-between; white-space: nowrap; }
  .ftext { overflow: hidden; }
  .dd { width: 15px; flex: none; border-left: 1px solid #3f3f3f; display: flex; align-items: center; justify-content: center; }
  .anglerow { display: flex; align-items: center; height: 17px; margin-top: 6px; }
  .aic { margin-left: 40px; width: 19px; }
  .flip1 { margin-left: 39px; }
  .flip2 { margin-left: 12px; }
  .character { height: 187px; }
  .selrow { margin: 0 0 7px 8px; }
  .selrow.first { margin-top: 1px; }
  .charrow { display: flex; align-items: center; height: 17px; margin-top: 8px; padding-left: 8px; }
  .charrow.one { margin-top: 13px; }
  .serifT { width: 24px; font: 700 17px/15px "Liberation Serif", serif; color: #ddd; }
  .serifT small { font-size: 10px; }
  .va { width: 24px; display: flex; flex-direction: column; align-items: center; font-size: 10.500px; line-height: 12px; letter-spacing: -.6px; color: #ccc; }
  .vaarrow { margin-top: -2px; }
  .lead { width: 22px; margin: 0 0 0 27px; flex: none; }
  .stack { display: flex; align-items: center; }
  .aa { font-size: 8.500px; line-height: 8.500px; color: #ddd; margin-left: -1px; }
  .vabox { display: flex; flex-direction: column; align-items: center; }
  .vabox b { background: #d8d8d8; color: #535353; font-size: 9.500px; line-height: 11px; letter-spacing: -.4px; padding: 0 1px; }
  .vabox :global(.ic) { margin-top: -2px; }
  .colorrow { display: flex; align-items: center; justify-content: flex-end; margin: 5px 47px 0 0; height: 17px; color: #b0b0b0; font-size: 10px; gap: 7px; }
  .colorrow i { width: 61px; height: 17px; background: #ec008c; border: 1px solid #6a2c55; box-sizing: border-box; }
  .more { display: flex; justify-content: flex-end; padding-right: 51px; margin-top: 12px; }
  .paragraph { height: 91px; }
  .paragraph .sechead { height: 29px; }
  .aligns { display: flex; padding-left: 8px; margin-top: 3px; }
  .al { width: 24px; height: 22px; display: flex; align-items: center; justify-content: center; flex: none; }
  .al.active { background: #333; width: 22px; margin: 0 1px; }
  .dimic { opacity: .6; }
  .g1 { margin-left: 14px; } .g2 { margin-left: 13px; }
  .typeopts { border-bottom: 0; }
  .tyrow { display: flex; padding-left: 8px; height: 26px; align-items: center; font: 700 15px/18px "Liberation Serif", serif; color: #d8d8d8; }
  .tyrow.second { height: 36px; }
  .tyrow span { width: 24.200px; flex: none; text-align: center; }
  .tyrow sup, .tyrow sub { font-size: 8px; line-height: 0; }
  .tyrow small { font-size: 10px; }
  .tyrow .ul { text-decoration: underline; text-underline-offset: 3px; }
  .tyrow .st { text-decoration: line-through; }
  .tyrow .dimt { color: #838383; }
  .tyrow .it { font-style: italic; font-weight: 400; }
  .tyrow .oa { text-decoration: overline; font-weight: 400; }
  .tyrow .boxa { font-size: 12px; width: 16px; height: 14px; border: 1px solid #ccc; margin-left: 4px; line-height: 12px; }
  .typeopts .more { margin-top: 4px; }
  .pscroll { width: 15px; flex: none; background: #474747; display: flex; flex-direction: column; height: 495px; }
  .arr { height: 16px; display: flex; align-items: center; justify-content: center; flex: none; opacity: .7; }
  .arr.up { transform: rotate(180deg); }
  .pscroll .thumb { height: 380px; background: #6a6a6a; }
  .pscroll .arr:last-child { margin-top: auto; }

  .swatchpanel { height: 482px; }
  .sw .searchbox { margin-right: 10px; }
  .recentsw { display: flex; gap: 2px; margin: 1px 0 0 7px; flex: none; height: 16px; }
  .recentsw i { width: 16px; height: 16px; flex: none; }
  .swarea { height: 370px; flex: none; padding-top: 9px; display: flex; box-shadow: inset 0 1px 0 #444; margin-top: 2px; box-sizing: border-box; padding-left: 1px; }
  .swgrid { width: 268px; height: 360px; display: grid; grid-template-columns: repeat(15, 16px); grid-auto-rows: 16px; gap: 2px; overflow: hidden; flex: none; }
  .swgrid i.picked { outline: 2px solid #38b0ea; outline-offset: -1px; border: 1px solid #38b0ea; box-sizing: border-box; }
  .swscroll { width: 15px; margin-left: 2px; flex: none; display: flex; flex-direction: column; height: 360px; background: #4e4e4e; }
  .swscroll .thumb { height: 163px; background: #6a6a6a; margin-top: -1px; }
  .swscroll .arr:last-child { margin-top: auto; }
  .swfoot { height: 26px; gap: 14px; padding-right: 28px; }

  .layers { height: 481px; margin-top: 4px; position: relative; }
  .lfilter { height: 36px; display: flex; align-items: center; padding: 3px 0 0 3px; box-sizing: border-box; flex: none; }
  .lselect { display: flex; align-items: center; height: 20px; background: #454545; border: 1px solid #3f3f3f; border-radius: 2px; box-sizing: border-box; padding: 0 5px; font-size: 11px; color: #dcdcdc; }
  .lselect em { margin-left: auto; }
  .kind { width: 86px; gap: 3px; }
  .lf { width: 24px; display: flex; justify-content: center; flex: none; }
  .lf:nth-child(2) { margin-left: 6px; }
  .tt { font: 700 15px/16px "Liberation Serif", serif; color: #ddd; }
  .toggle { width: 9px; height: 18px; margin-left: 5px; background: #3a3a3a; border-radius: 5px; }
  .toggle i { width: 9px; height: 9px; border-radius: 50%; background: #ddd; }
  .lblend { height: 28px; display: flex; align-items: center; padding-left: 3px; border-bottom: 1px solid #454545; box-sizing: border-box; flex: none; }
  .blend { width: 128px; }
  .lbl { font-size: 10.500px; color: #b8b8b8; }
  .lblend .lbl { margin-left: 7px; width: 40px; }
  .pct { width: 51px; height: 18px; background: #454545; border: 1px solid #3f3f3f; box-sizing: border-box; display: flex; align-items: center; justify-content: space-between; padding-left: 5px; font-size: 10.500px; color: #dcdcdc; }
  .pct em { width: 14px; border-left: 1px solid #3f3f3f; display: flex; justify-content: center; height: 100%; align-items: center; }
  .llock { height: 22px; display: flex; align-items: center; padding-left: 5px; flex: none; box-sizing: border-box; }
  .llock .lbl { width: 31px; }
  .lk { width: 15px; margin-right: 7px; flex: none; }
  .lk.check { height: 11px; width: 11px; margin: 0 11px 0 2px; background: repeating-conic-gradient(#ccc 0 25%, #666 0 50%) 0 0 / 6px 6px; }
  .dimk { opacity: .4; }
  .llock .lbl.fill { margin-left: 12px; width: 18px; }
  .llist { height: 342px; flex: none; position: relative; padding-top: 5px; box-sizing: border-box; }
  .lrow { height: 40px; display: flex; }
  .eye { width: 29px; display: flex; align-items: center; justify-content: center; }
  .lsel { width: 242px; background: #6a6a6a; display: flex; align-items: center; }
  .lthumb { width: 36px; height: 36px; margin-left: 2px; box-sizing: border-box; border: 1px solid #fff; position: relative; text-align: center; font: 400 24px/34px "Liberation Serif", serif; color: #ddd; }
  .lthumb::before { content: ""; position: absolute; left: 10px; right: 10px; top: -1px; bottom: -1px; background: #6a6a6a; }
  .lthumb::after { content: ""; position: absolute; top: 10px; bottom: 10px; left: -1px; right: -1px; background: #6a6a6a; }
  .lthumb span { position: relative; z-index: 1; }
  .lname { margin-left: 7px; font-size: 10px; color: #eee; }
  .redbox { position: absolute; left: -3px; top: -2px; width: 282px; height: 63px; border: 2px solid #cf3c3c; border-radius: 5px; box-sizing: border-box; }
  .redtext { margin: 25px 0 0 15px; font: 700 34px/40px Roboto, sans-serif; letter-spacing: .3px; color: #ff0808; white-space: nowrap; }
  .layerfoot { height: 26px; gap: 13.500px; padding-right: 26px; }
  .fx { font: italic 700 13px/14px "Liberation Serif", serif; color: #d8d8d8; }
</style>
